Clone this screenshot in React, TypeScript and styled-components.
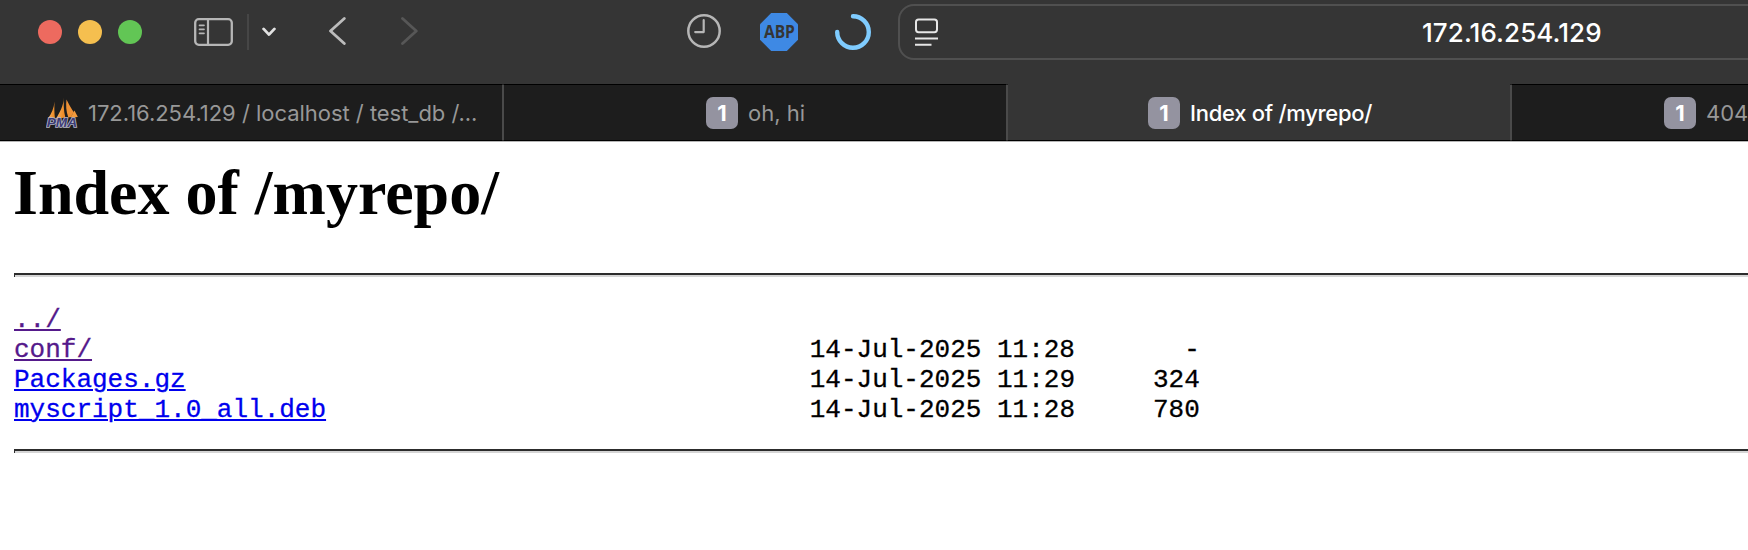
import React from 'react';
import styled, { createGlobalStyle } from 'styled-components';

const GlobalStyle = createGlobalStyle`
  * { box-sizing: border-box; }
  html, body { margin: 0; background: #fff; }
  body { overflow: hidden; }
`;

const Window = styled.div`
  width: 1748px;
  height: 550px;
  overflow: hidden;
  display: flex;
  flex-direction: column;
  background: #fff;
  font-family: Inter, 'Liberation Sans', sans-serif;
`;

const Toolbar = styled.header`
  display: flex;
  align-items: flex-start;
  flex: none;
  height: 84px;
  padding: 4px 0 0 38px;
  background: #353535;
`;

const Group = styled.div<{ $before?: number; $gap?: number }>`
  display: flex;
  align-items: center;
  flex: none;
  height: 56px;
  margin-left: ${(p) => p.$before ?? 0}px;
  gap: ${(p) => p.$gap ?? 0}px;
  svg { display: block; flex: none; }
`;

const Light = styled.span<{ $color: string }>`
  width: 24px;
  height: 24px;
  border-radius: 50%;
  background: ${(p) => p.$color};
`;

const Divider = styled.span`
  width: 2px;
  height: 36px;
  margin: 0 13px 0 14px;
  background: #464646;
`;

const AddressBar = styled.div`
  display: flex;
  align-items: center;
  flex: none;
  width: 1228px;
  height: 56px;
  margin-left: 27px;
  padding-left: 15px;
  border: 2px solid #505050;
  border-radius: 16px;
`;

const Address = styled.span`
  margin-left: 484px;
  padding-top: 1px;
  color: #fff;
  font-size: 26px;
  font-weight: 500;
  letter-spacing: 0.08px;
  line-height: 52px;
  white-space: nowrap;
`;

const TabBar = styled.nav`
  display: flex;
  flex: none;
  height: 58px;
  background: #1d1d1d;
  border-bottom: 1px solid #b5b5b5;
`;

const Tab = styled.div<{ $active?: boolean; $start: number; $width: number }>`
  display: flex;
  align-items: center;
  flex: none;
  gap: 10px;
  width: ${(p) => p.$width}px;
  height: 57px;
  padding-left: ${(p) => p.$start}px;
  border-top: 1px solid ${(p) => (p.$active ? '#353535' : '#000')};
  border-bottom: 1px solid #000;
  background: ${(p) => (p.$active ? '#353535' : '#1d1d1d')};
  color: ${(p) => (p.$active ? '#fff' : '#989898')};
  font-weight: ${(p) => (p.$active ? 500 : 400)};
`;

const TabTitle = styled.span<{ $spacing?: number }>`
  font-size: 22px;
  line-height: 30px;
  letter-spacing: ${(p) => p.$spacing ?? 0}px;
  white-space: nowrap;
`;

const Separator = styled.span`
  flex: none;
  width: 2px;
  height: 55px;
  margin-top: 1px;
  background: #4a4a4a;
`;

const Badge = styled.span`
  flex: none;
  width: 32px;
  height: 32px;
  border-radius: 7px;
  background: #9493a0;
  color: #fff;
  font-size: 22px;
  font-weight: 700;
  line-height: 33px;
  text-align: center;
`;

const Page = styled.main`
  padding: 14px 0 0 14px;
`;

const Heading = styled.h1`
  margin: 0 0 43px -1px;
  color: #000;
  font: bold 64px/74px 'Liberation Serif', serif;
`;

const Rule = styled.hr`
  height: 4px;
  margin: 0;
  border: 0;
  border-top: 2px solid #2c2c2c;
  border-left: 1px solid #2c2c2c;
  background: #d5d5d5;
`;

const Listing = styled.pre`
  margin: 28px 0 24px;
  color: #000;
  font: 26px/30px 'Liberation Mono', monospace;
  -webkit-text-stroke: 0.3px currentColor;
`;

const Entry = styled.a<{ $visited?: boolean }>`
  color: ${(p) => (p.$visited ? '#551a8b' : '#0000ee')};
  text-decoration: underline;
  text-decoration-thickness: 2px;
  text-underline-offset: 2px;
`;

const files = [
  { name: '../', visited: true },
  { name: 'conf/', date: '14-Jul-2025 11:28', size: '-', visited: true },
  { name: 'Packages.gz', date: '14-Jul-2025 11:29', size: '324' },
  { name: 'myscript_1.0_all.deb', date: '14-Jul-2025 11:28', size: '780' },
];

const SidebarIcon = () => (
  <svg width="39" height="28" viewBox="0 0 39 28" fill="none" stroke="#b6b6b6">
    <rect x="1.2" y="1.2" width="36.6" height="25.6" rx="3.6" strokeWidth="2.3" />
    <path d="M14 1v26" strokeWidth="2.2" />
    <path d="M5.5 7.3h4.500M5.500 11.300h4.500M5.500 15.300h4.500" strokeWidth="1.7" strokeLinecap="round" />
  </svg>
);

const MenuChevron = () => (
  <svg width="14" height="10" viewBox="0 0 14 10" fill="none" stroke="#e2e2e2" strokeWidth="2.8" strokeLinecap="round" strokeLinejoin="round">
    <path d="M1.6 1.9 7 7.6l5.4-5.7" />
  </svg>
);

const NavChevron = ({ forward }: { forward?: boolean }) => (
  <svg width="17" height="30" viewBox="0 0 17 30" fill="none" stroke={forward ? '#575757' : '#bcbcbc'} strokeWidth="2.8" strokeLinecap="round" strokeLinejoin="round">
    <path d={forward ? 'M1.5 1.5 15.3 14 1.5 26.5' : 'M15.3 1.5 1.5 14 15.3 26.5'} />
  </svg>
);

const ClockIcon = () => (
  <svg width="34" height="36" viewBox="0 0 34 36" fill="none" stroke="#b6b6b6" strokeWidth="2.5">
    <circle cx="17" cy="17" r="15.7" />
    <path d="M16.7 6.2v11.9H8.2" strokeWidth="2.2" strokeLinecap="round" strokeLinejoin="round" />
  </svg>
);

const AbpIcon = () => (
  <svg width="38" height="38" viewBox="0 0 38 38">
    <path d="M11.2 0h15.6L38 11.2v15.6L26.8 38H11.2L0 26.8V11.2z" fill="#3e89e4" />
    <text x="19.4" y="24.8" textAnchor="middle" textLength="31" lengthAdjust="spacingAndGlyphs" fontFamily="'Open Sans', 'Noto Sans', sans-serif" fontWeight="700" fontSize="17.5" fill="#353535">ABP</text>
  </svg>
);

const RingIcon = () => (
  <svg width="36" height="36" viewBox="0 0 36 36" fill="none" stroke="#7fccff" strokeWidth="4.4" strokeLinecap="round">
    <path d="M18 2.2A15.8 15.8 0 1 1 2.2 18" />
  </svg>
);

const ReaderIcon = () => (
  <svg width="23" height="28" viewBox="0 0 23 28" fill="none" stroke="#e6e6e6" strokeWidth="2">
    <rect x="1" y="1.4" width="21" height="12.8" rx="2.6" />
    <path d="M0 20.4h23M0 26.8h16.5" />
  </svg>
);

const PmaIcon = () => (
  <svg width="32" height="32" viewBox="0 0 32 32">
    <defs>
      <linearGradient id="sail" x1="0" x2="1" y1="0" y2="0.3">
        <stop offset="0" stopColor="#f7d2a0" />
        <stop offset="0.55" stopColor="#f3a047" />
        <stop offset="1" stopColor="#ed8a24" />
      </linearGradient>
    </defs>
    <path d="M8.5 4.5C8 11 5.5 16.5 2.3 21L9 22C8.200 15 8.300 9.500 8.500 4.500z" fill="url(#sail)" />
    <path d="M18 0.500C17.500 8.500 14 15 9.800 22L19.300 20.500C17.500 13 17.500 6 18 0.500z" fill="url(#sail)" />
    <path d="M20.500 2.500C19.800 8 20 14 22.300 20.500L25 20L27.500 15.500L31.500 20C28 16 24 10 20.500 2.500z" fill="#ee9135" />
    <path d="M28.500 13.500 24.500 20.500 31.800 20z" fill="#f39a3b" />
    <text x="0.700" y="29.800" textLength="30.500" lengthAdjust="spacingAndGlyphs" fontFamily="'Liberation Sans', sans-serif" fontWeight="700" fontStyle="italic" fontSize="12.500" fill="#3c3c75" stroke="#b9b9c8" strokeWidth="1.500" paintOrder="stroke">PMA</text>
  </svg>
);

export default function App() {
  return (
    <Window>
      <GlobalStyle />
      <Toolbar>
        <Group $gap={16}>
          <Light $color="#ed6a5f" />
          <Light $color="#f5bf4f" />
          <Light $color="#62c655" />
        </Group>
        <Group $before={52}>
          <SidebarIcon />
          <Divider />
          <MenuChevron />
        </Group>
        <Group $before={53} $gap={55}>
          <NavChevron />
          <NavChevron forward />
        </Group>
        <Group $before={269}>
          <ClockIcon />
        </Group>
        <Group $before={39} $gap={37}>
          <AbpIcon />
          <RingIcon />
        </Group>
        <AddressBar>
          <ReaderIcon />
          <Address>172.16.254.129</Address>
        </AddressBar>
      </Toolbar>
      <TabBar>
        <Tab $start={46} $width={502}>
          <PmaIcon />
          <TabTitle $spacing={-0.03}>172.16.254.129 / localhost / test_db /...</TabTitle>
        </Tab>
        <Separator />
        <Tab $start={202} $width={502}>
          <Badge>1</Badge>
          <TabTitle>oh, hi</TabTitle>
        </Tab>
        <Separator />
        <Tab $active $start={140} $width={502}>
          <Badge>1</Badge>
          <TabTitle $spacing={-0.28}>Index of /myrepo/</TabTitle>
        </Tab>
        <Separator />
        <Tab $start={152} $width={236}>
          <Badge>1</Badge>
          <TabTitle>404</TabTitle>
        </Tab>
      </TabBar>
      <Page>
        <Heading>Index of /myrepo/</Heading>
        <Rule />
        <Listing>
          {files.map((f) => (
            <React.Fragment key={f.name}>
              <Entry $visited={f.visited}>{f.name}</Entry>
              {f.date ? ' '.repeat(51 - f.name.length) + f.date + f.size.padStart(8) : ''}
              {'\n'}
            </React.Fragment>
          ))}
        </Listing>
        <Rule />
      </Page>
    </Window>
  );
}
